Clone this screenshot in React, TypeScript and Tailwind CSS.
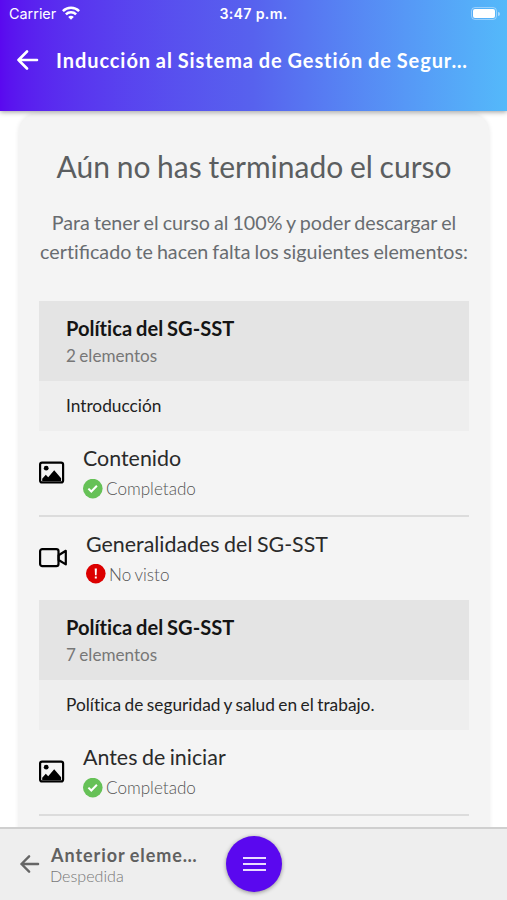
import type { ReactNode } from "react";

type Item = { title: string; type: "image" | "video"; done: boolean };
type Section = { title: string; count: number; subtitle: string; items: Item[] };

const sections: Section[] = [
  {
    title: "Política del SG-SST",
    count: 2,
    subtitle: "Introducción",
    items: [
      { title: "Contenido", type: "image", done: true },
      { title: "Generalidades del SG-SST", type: "video", done: false },
    ],
  },
  {
    title: "Política del SG-SST",
    count: 7,
    subtitle: "Política de seguridad y salud en el trabajo.",
    items: [{ title: "Antes de iniciar", type: "image", done: true }],
  },
];

function ArrowLeft({ className }: { className: string }) {
  return (
    <svg viewBox="0 0 22 20" fill="none" stroke="currentColor" strokeWidth="2.6" strokeLinecap="round" strokeLinejoin="round" className={className}>
      <path d="M10 1.5 1.5 10l8.5 8.5M1.5 10H20" />
    </svg>
  );
}

function WifiIcon() {
  return (
    <svg viewBox="0 0 18 14" className="ml-[6px] h-[14px] w-[18px]" fill="none" stroke="white" strokeWidth="2.5">
      <path d="M0.9 5.1a11.5 11.5 0 0 1 16.2 0" />
      <path d="M3.9 8.4a7.2 7.2 0 0 1 10.2 0" />
      <path d="M9 13.8 6.2 11a3.9 3.9 0 0 1 5.6 0Z" fill="white" stroke="none" />
    </svg>
  );
}

function ImageIcon() {
  return (
    <svg viewBox="0 0 26 23" className="h-[23px] w-[26px]">
      <rect x="1.1" y="1.6" width="23" height="19.8" rx="2" fill="none" stroke="black" strokeWidth="2.2" />
      <circle cx="7.2" cy="7.2" r="2.4" />
      <path d="M3.2 20v-2.3l3.6-3.9 2.4 2.4 6-7 6.9 8V20Z" />
    </svg>
  );
}

function VideoIcon() {
  return (
    <svg viewBox="0 0 29 20" className="h-[20px] w-[29px]" fill="none" stroke="black" strokeWidth="2.2" strokeLinejoin="round">
      <rect x="1.1" y="1.1" width="18.4" height="17" rx="2.2" />
      <path d="m19.6 7.2 7.2-4.4v13.6l-7.2-4.4Z" />
    </svg>
  );
}

function StatusIcon({ done }: { done: boolean }) {
  return (
    <svg viewBox="0 0 20 20" className="h-5 w-5">
      <circle cx="9.8" cy="9.6" r="9.8" fill={done ? "#66c157" : "#dc0000"} />
      {done ? (
        <path d="m5.4 9.6 2.9 2.9 5.6-5.7" fill="none" stroke="white" strokeWidth="2" />
      ) : (
        <path d="M8.7 4.6h2.2l-.3 6.6H9Zm.1 7.9h2v2h-2Z" fill="white" />
      )}
    </svg>
  );
}

function Row({ item, children }: { item: Item; children: ReactNode }) {
  return (
    <div className="flex h-[83.5px]">
      <div className={item.type === "image" ? "w-11 pt-[30px]" : "w-[47px] pt-[31px]"}>{children}</div>
      <div>
        <p className="mt-[12px] text-[21.4px] leading-[30px] whitespace-nowrap text-[#2a2a2a]">{item.title}</p>
        <div className="mt-[5px] flex items-center">
          <StatusIcon done={item.done} />
          <span className="ml-[3px] pt-[1px] text-[17.1px] leading-5 font-light text-[#555]">
            {item.done ? "Completado" : "No visto"}
          </span>
        </div>
      </div>
    </div>
  );
}

export default function App() {
  return (
    <div className="flex h-[900px] w-[507px] flex-col overflow-hidden bg-white font-[Lato,sans-serif] [word-spacing:-0.06em]">
      <header className="z-10 h-[111px] shrink-0 bg-linear-to-r from-[#5a08ef] via-[#5762ee] to-[#54b9fa] text-white shadow-[0_1px_5px_rgba(0,0,0,0.4)]">
        <div className="grid h-[27px] grid-cols-3 items-center px-[9px] font-[Inter,sans-serif] [word-spacing:0]">
          <div className="flex items-center">
            <span className="text-[14.4px]">Carrier</span>
            <WifiIcon />
          </div>
          <span className="text-center text-[14.2px] font-semibold tracking-[0.3px]">3:47 p.m.</span>
          <div className="flex items-center justify-end gap-[1px]">
            <div className="h-[13px] w-[26px] rounded-[4px] border border-white/40 p-[1px]">
              <div className="h-full rounded-[2px] bg-white" />
            </div>
            <div className="-mr-[2px] h-[4px] w-[2px] rounded-r-full bg-white/50" />
          </div>
        </div>
        <div className="flex h-[65px] items-center pl-[17px]">
          <ArrowLeft className="h-5 w-[22px]" />
          <h1 className="ml-[17px] text-[20px] font-bold tracking-[0.93px] whitespace-nowrap">
            Inducción al Sistema de Gestión de Segur…
          </h1>
        </div>
      </header>

      <main className="h-[716px] shrink-0 overflow-hidden pt-[3px] pr-[18px] pl-[19px]">
        <div className="h-[740px] rounded-[18px] bg-[#f4f4f4] px-[20px] pt-[31px] shadow-[0_0_5px_rgba(0,0,0,0.1)]">
          <h2 className="text-center text-[30px] leading-[42px] whitespace-nowrap text-[#5b5e60]">Aún no has terminado el curso</h2>
          <p className="-mx-3 mt-[21px] text-center text-[19.7px] leading-[29px] whitespace-nowrap text-[#686c70]">
            Para tener el curso al 100% y poder descargar el
            <br />
            <span className="[font-variant-ligatures:none]">cert</span>ificado te hacen falta los siguientes elementos:
          </p>
          <div className="mt-[35px] [font-variant-ligatures:none]">
            {sections.map((section) => (
              <section key={section.count}>
                <div className="h-[80px] bg-[#e4e4e4] pt-[13px] pl-[27px]">
                  <h3 className="text-[20.1px] leading-[28px] font-bold text-[#141414]">{section.title}</h3>
                  <p className="text-[17.1px] leading-[28px] text-[#777]">{section.count} elementos</p>
                </div>
                <div className="flex h-[50px] items-center bg-[#eeeeee] pl-[27px] text-[17.3px] whitespace-nowrap text-[#222]">
                  {section.subtitle}
                </div>
                {section.items.map((item) => (
                  <div key={item.title} className={item.done ? "border-b-2 border-[#dcdcdc]" : ""}>
                    <Row item={item}>{item.type === "image" ? <ImageIcon /> : <VideoIcon />}</Row>
                  </div>
                ))}
              </section>
            ))}
          </div>
        </div>
      </main>

      <footer className="z-10 flex h-[73px] shrink-0 border-t-2 border-[#cfcfcf] bg-[#eeeeee] pl-[20px]">
        <ArrowLeft className="mt-[26px] h-[18px] w-5 text-[#666]" />
        <div className="ml-[10px] w-[176px] whitespace-nowrap">
          <p className="mt-[14px] pl-[1px] text-[18px] leading-[24px] font-bold tracking-[0.95px] text-[#606060]">Anterior eleme…</p>
          <p className="-mt-[1px] text-[16.1px] leading-[20px] font-light text-[#777]">Despedida</p>
        </div>
        <button className="mt-[7px] flex h-14 w-14 flex-col items-center justify-center gap-[4px] rounded-full bg-[#5a08ef] shadow-[0_1px_4px_rgba(0,0,0,0.4)]">
          <span className="h-[2px] w-[23px] bg-[#eadcff]" />
          <span className="h-[2px] w-[23px] bg-[#eadcff]" />
          <span className="h-[2px] w-[23px] bg-[#eadcff]" />
        </button>
      </footer>
    </div>
  );
}
